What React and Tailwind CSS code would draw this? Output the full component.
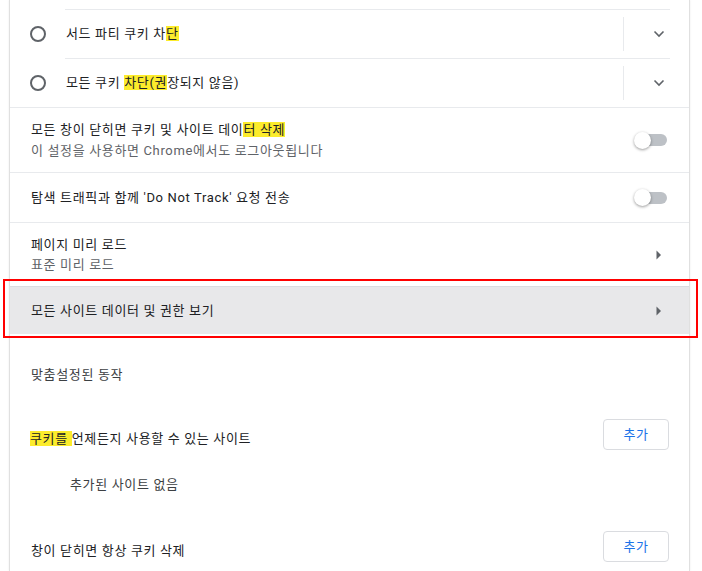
import React from "react";

const font = { fontFamily: 'Roboto, "Noto Sans CJK KR", sans-serif', letterSpacing: "0.65px" };

function Hl({ children }) {
  return <span className="bg-[#fcec2c]">{children}</span>;
}

function Chevron() {
  return (
    <svg width="12" height="8" viewBox="0 0 12 8" className="block">
      <path d="M1.5 1.5 L6 6 L10.5 1.5" fill="none" stroke="#5f6368" strokeWidth="1.6" />
    </svg>
  );
}

function Arrow() {
  return (
    <svg width="6" height="10" viewBox="0 0 6 10" className="block">
      <path d="M0.5 0.5 L5 5 L0.5 9.5 Z" fill="#5f6368" />
    </svg>
  );
}

function Toggle() {
  return (
    <div className="relative w-[34px] h-[18px] flex items-center">
      <div className="absolute left-[5px] w-[28px] h-[12px] rounded-full bg-[#bdc1c6]" />
      <div className="absolute left-0 w-[17px] h-[17px] rounded-full bg-white shadow-[0_1px_3px_rgba(0,0,0,0.4)]" />
    </div>
  );
}

function RadioRow({ children }) {
  return (
    <div className="flex h-[49px]">
      <div className="w-[55px] flex items-center pl-[20px]">
        <div className="w-[16px] h-[16px] rounded-full border-2 border-[#5f6368]" />
      </div>
      <div className="flex-1 mr-[19px] border-t border-[#e8eaed] flex items-center">
        <div className="flex-1 pl-[1px] text-[13px] leading-[20px] text-[#202124]">{children}</div>
        <div className="w-px h-[34px] bg-[#e8eaed]" />
        <div className="w-[46px] flex justify-end pr-[5px]">
          <Chevron />
        </div>
      </div>
    </div>
  );
}

export default function App() {
  return (
    <div className="relative w-[702px] h-[571px] overflow-hidden bg-white" style={font}>
      <div className="ml-[9px] w-[681px] h-[571px] border-l border-r border-[#e0e0e0] shadow-[0_0_2px_rgba(0,0,0,0.08)] bg-white">
        <div className="h-[9px]" />
        <RadioRow>
          서드 파티 쿠키 차<Hl>단</Hl>
        </RadioRow>
        <RadioRow>
          모든 쿠키 <Hl>차단(권</Hl>장되지 않음)
        </RadioRow>

        <div className="h-[65px] border-t border-[#e8eaed] flex items-center pl-[21px] pr-[21px]">
          <div className="flex-1 text-[13px] leading-[21px]">
            <div className="text-[#202124]">
              모든 창이 닫히면 쿠키 및 사이트 데이<Hl>터 삭제</Hl>
            </div>
            <div className="text-[#5f6368]">이 설정을 사용하면 Chrome에서도 로그아웃됩니다</div>
          </div>
          <Toggle />
        </div>

        <div className="h-[50px] border-t border-[#e8eaed] flex items-center pl-[21px] pr-[21px]">
          <div className="flex-1 text-[13px] leading-[20px] text-[#202124]">
            탐색 트래픽과 함께 'Do Not Track' 요청 전송
          </div>
          <Toggle />
        </div>

        <div className="h-[64px] border-t border-[#e8eaed] flex items-center pl-[21px] pr-[27px]">
          <div className="flex-1 text-[13px] leading-[20px]">
            <div className="text-[#202124]">페이지 미리 로드</div>
            <div className="text-[#5f6368]">표준 미리 로드</div>
          </div>
          <Arrow />
        </div>

        <div className="h-[48px] border-t border-[#dadce0] bg-[#e8e8ea] flex items-center pl-[21px] pr-[27px]">
          <div className="flex-1 text-[13px] leading-[20px] text-[#202124]">
            모든 사이트 데이터 및 권한 보기
          </div>
          <Arrow />
        </div>

        <div className="pt-[31px] pl-[21px] text-[13px] leading-[20px] text-[#3c4043]">맞춤설정된 동작</div>

        <div className="mt-[34px] flex items-center pl-[20px] pr-[20px] h-[31px]">
          <div className="flex-1 pt-[9px] text-[13px] leading-[20px] text-[#202124]">
            <Hl>쿠키를 </Hl>언제든지 사용할 수 있는 사이트
          </div>
          <button className="w-[66px] h-[31px] rounded-[4px] border border-[#dadce0] bg-white text-[13px] text-[#1a73e8]">
            추가
          </button>
        </div>

        <div className="mt-[25px] pl-[60px] text-[13px] leading-[20px] text-[#3c4043]">추가된 사이트 없음</div>

        <div className="mt-[36px] flex items-center pl-[21px] pr-[20px] h-[31px]">
          <div className="flex-1 pt-[9px] text-[13px] leading-[20px] text-[#202124]">창이 닫히면 항상 쿠키 삭제</div>
          <button className="w-[66px] h-[31px] rounded-[4px] border border-[#dadce0] bg-white text-[13px] text-[#1a73e8]">
            추가
          </button>
        </div>
      </div>

      <div className="absolute left-[3px] top-[279px] w-[695px] h-[59px] border-2 border-[#ff0000] pointer-events-none" />
    </div>
  );
}
